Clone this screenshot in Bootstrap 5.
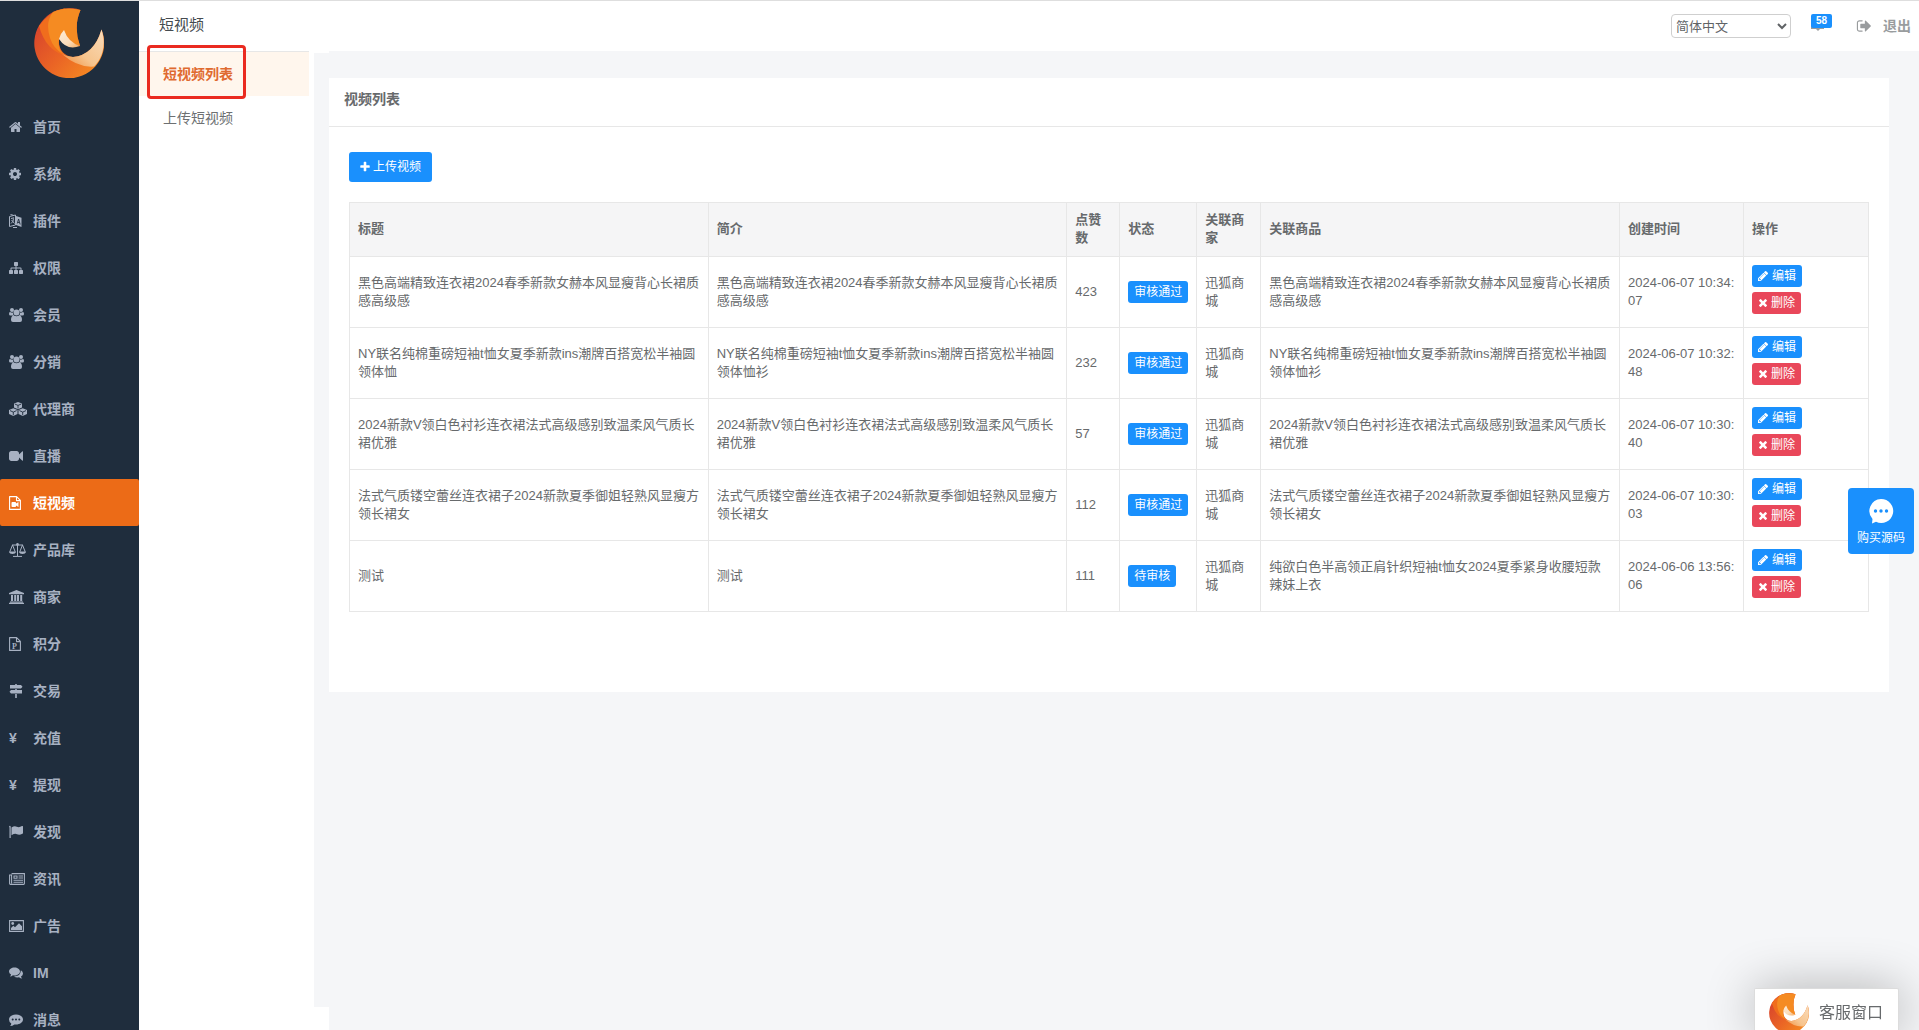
<!DOCTYPE html>
<html lang="zh-CN">
<head>
<meta charset="utf-8">
<meta name="viewport" content="width=device-width, initial-scale=1">
<title>短视频</title>
<link href="https://cdn.jsdelivr.net/npm/bootstrap@5.3.0/dist/css/bootstrap.min.css" rel="stylesheet">
<style>
  :root {
    --brand-blue: #1a90fd;
    --brand-red: #e9475a;
    --ink: #676a6c;
    --line: #e7e7e7;
  }
  body {
    font-family: "Liberation Sans", "Noto Sans CJK SC", sans-serif;
    font-size: 13px;
    line-height: 18px;
    color: var(--ink);
    background: #fff;
    border-top: 1px solid #dedede;
  }
  .icon { height: 14px; width: auto; fill: currentColor; display: block; }
  .sprite { width: 0; height: 0; }

  .side-bar { width: 139px; background: #1f2d3d; }
  .side-logo { padding: 7px 0 25px 34px; }
  .side-logo svg { width: 70px; height: 70px; display: block; }
  .side-link {
    height: 47px;
    padding: 0 9px;
    color: #a7b1c2;
    font-size: 14px;
    font-weight: 600;
  }
  .side-link:hover { color: #fff; }
  .side-link.active { background: #ec6b17; color: #fff; border-radius: 2px; }
  .side-icon { width: 24px; }

  .sub-menu { width: 170px; margin-right: 5px; }
  .sub-title { height: 51px; padding: 14px 20px; font-size: 15px; line-height: 20px; color: #454b50; border-bottom: 1px solid var(--line); }
  .sub-link { height: 44px; padding: 0 24px; font-size: 14px; color: #6d7072; }
  .sub-link.active { background: #fff6ed; color: #df6a30; font-weight: 600; }
  .focus-frame { top: -7px; left: 8px; width: 99px; height: 54px; border: 3px solid #ea2a20; border-radius: 4px; pointer-events: none; }

  .gutter { width: 15px; margin: 2px 0 23px; background: #f5f6f8; }
  .top-bar { height: 50px; padding: 0 8px; }
  .lang-select { width: 120px; height: 24px; border: 1px solid #cfcfcf; border-radius: 4px; background: #fff; color: #606366; font-size: 13px; }
  .msg-count { width: 21px; height: 14px; background: var(--brand-blue); font-size: 10px; line-height: 14px; border-radius: 2px; padding: 0; }
  .msg-link { width: 21px; height: 18px; margin: 0 24px 6px 20px; color: #999c9e; }
  .msg-link .icon { height: 18px; width: 14px; }
  .log-out { color: #999c9e; font-size: 14px; font-weight: 600; gap: 11px; }
  .log-out .icon { height: 16px; }

  .page-area { background: #f5f6f8; padding: 27px 30px 0 0; }
  .panel { background: #fff; padding-bottom: 80px; }
  .panel-head { height: 49px; padding: 13px 15px; font-size: 14px; font-weight: 600; border-bottom: 1px solid var(--line); }
  .panel-main { padding: 25px 20px 0; }

  .btn-blue, .btn-rose { --bs-btn-color: #fff; --bs-btn-hover-color: #fff; font-size: 12px; border: 0; }
  .btn-blue { --bs-btn-bg: var(--brand-blue); --bs-btn-hover-bg: #0b7fe8; }
  .btn-rose { --bs-btn-bg: var(--brand-red); --bs-btn-hover-bg: #d8394c; }
  .btn-add { height: 30px; padding: 0 11px; border-radius: 3px; gap: 3px; margin-bottom: 20px; }
  .btn-tiny { height: 22px; padding: 0 6px; border-radius: 3px; line-height: 20px; gap: 3px; }
  .btn-tiny .icon, .btn-add .icon { height: 12px; }

  .video-table { --bs-table-color: #676a6c; --bs-table-bg: #fff; --bs-table-border-color: #e7e7e7; table-layout: fixed; color: var(--ink); border-color: var(--line); }
  .video-table td, .video-table th { padding: 8px; vertical-align: middle; word-break: break-all; }
  .video-table th { height: 54px; padding: 7px 8px 9px; font-weight: 600; background: #f5f5f6; border-bottom-color: #ddd; }
  .video-table td { height: 71px; }
  .video-table td.ops { vertical-align: top; padding-bottom: 0; }
  .ops-stack { gap: 5px; }
  .w-likes { width: 53px; } .w-state { width: 77px; } .w-shop { width: 64px; }
  .w-time { width: 124px; } .w-ops { width: 125px; }

  .buy-float { right: 5px; top: 488px; width: 66px; height: 66px; padding: 10px 0 0; border-radius: 4px; gap: 5px; }
  .buy-float .icon { height: 26px; }
  .chat-dock { right: 20px; bottom: 0; width: 145px; height: 42px; padding: 4px 14px; background: #fff; border: 1px solid #dcdcdc; border-bottom: 0; border-radius: 2px 2px 0 0; box-shadow: 1px 1px 50px rgba(0, 0, 0, .3); }
  .chat-dock svg { width: 40px; height: 40px; flex: none; }
  .chat-name { font-size: 16px; line-height: 40px; color: #676a6c; }
  .chat-clip { height: 37px; overflow: hidden; gap: 10px; }
</style>
</head>
<body class="vh-100 overflow-hidden d-flex">

<svg class="sprite position-absolute" aria-hidden="true">
  <defs>
    <linearGradient id="g-base" x1="0" y1=".3" x2=".8" y2="1"><stop offset="0" stop-color="#d8452c"/><stop offset=".5" stop-color="#ea6425"/><stop offset="1" stop-color="#f58a22"/></linearGradient>
    <linearGradient id="g-light" x1="1" y1="0" x2="0" y2="1"><stop offset="0" stop-color="#f9dcbb"/><stop offset=".6" stop-color="#f7c48d"/><stop offset="1" stop-color="#ef8c3c"/></linearGradient>
    <linearGradient id="g-tooth" x1="0" y1="0" x2="1" y2="1"><stop offset="0" stop-color="#fdebd6"/><stop offset=".6" stop-color="#fbdcba"/><stop offset="1" stop-color="#f6a95c"/></linearGradient>
    <symbol id="logo" viewBox="0 0 70 70">
      <path fill="url(#g-base)" d="M46.500 2A35 35 0 1 0 67.500 21.500Q60 47 39 49C30 48 24 41 25 31L46 38Q39 19 46.500 2Z"/>
      <path fill="#f06d1d" d="M5 18Q15 4 30 .5Q46 4 42 30L25 31C24 39 27 44 31 47Q12 43 5 18Z"/>
      <path fill="#f58b22" d="M46.500 2Q32 -2 19 4Q11 14 16 30Q19 40 29 46C25 42 24 37 25 31L46 38Q39 19 46.500 2Z"/>
      <path fill="url(#g-light)" d="M67.500 21.500C74 40 65 54 60 58.500Q44 60 28 46Q33 49 39 49Q60 47 67.500 21.500Z"/>
      <path fill="url(#g-tooth)" d="M30 22Q26 26 25 31Q33 43 46 38Q34 34 30 22Z"/>
    </symbol>
    <symbol id="i-home" viewBox="64 0 1664 1792"><path d="M1472 992v480q0 26-19 45t-45 19h-384v-384h-256v384h-384q-26 0-45-19t-19-45v-480q0-1 .5-3t.5-3l575-474 575 474q1 2 1 6zm223-69l-62 74q-8 9-21 11h-3q-13 0-21-7l-692-577-692 577q-12 8-24 7-13-2-21-11l-62-74q-8-10-7-23.500t11-21.500l719-599q32-26 76-26t76 26l244 204v-195q0-14 9-23t23-9h192q14 0 23 9t9 23v408l219 182q10 8 11 21.500t-7 23.500z"/></symbol>
    <symbol id="i-cog" viewBox="128 0 1536 1792"><path d="M1152 896q0-106-75-181t-181-75-181 75-75 181 75 181 181 75 181-75 75-181zm512-109v222q0 12-8 23t-20 13l-185 28q-19 54-39 91 35 50 107 138 10 12 10 25t-9 23q-27 37-99 108t-94 71q-12 0-26-9l-138-108q-44 23-91 38-16 136-29 186-7 28-36 28h-222q-14 0-24.500-8.500t-11.500-21.500l-28-184q-49-16-90-37l-141 107q-10 9-25 9-14 0-25-11-126-114-165-168-7-10-7-23 0-12 8-23 15-21 51-66.500t54-70.500q-27-50-41-99l-183-27q-13-2-21-12.500t-8-23.500v-222q0-12 8-23t19-13l186-28q14-46 39-92-40-57-107-138-10-12-10-24 0-10 9-23 26-36 98.500-107.500t94.500-71.500q13 0 26 10l138 107q44-23 91-38 16-136 29-186 7-28 36-28h222q14 0 24.500 8.500t11.500 21.500l28 184q49 16 90 37l142-107q9-9 24-9 13 0 25 10 129 119 165 170 7 8 7 22 0 12-8 23-15 21-51 66.500t-54 70.500q26 50 41 98l183 28q13 2 21 12.500t8 23.500z"/></symbol>
    <symbol id="i-lang" viewBox="0 0 13 14"><path fill="none" stroke="currentColor" d="M.5 2.500l6-1.500v10l-6 1.500zM2 4.500l3-.7M2 9.500q2.500-1.500 2.500-5M2.500 6l3 3.500M1.500.5l3 .8M4 13.500h4"/><path d="M7 2l5.500 1.700v9.300L7 11z"/><path stroke="#1f2d3d" stroke-width=".9" fill="none" d="M8.300 9.500l1.300-4.500 1.600 5.500M8.800 8.300l1.900.5"/></symbol>
    <symbol id="i-sitemap" viewBox="0 0 1792 1792"><path d="M1792 1248v320q0 40-28 68t-68 28h-320q-40 0-68-28t-28-68v-320q0-40 28-68t68-28h96v-192h-512v192h96q40 0 68 28t28 68v320q0 40-28 68t-68 28h-320q-40 0-68-28t-28-68v-320q0-40 28-68t68-28h96v-192h-512v192h96q40 0 68 28t28 68v320q0 40-28 68t-68 28h-320q-40 0-68-28t-28-68v-320q0-40 28-68t68-28h96v-192q0-52 38-90t90-38h512v-192h-96q-40 0-68-28t-28-68v-320q0-40 28-68t68-28h320q40 0 68 28t28 68v320q0 40-28 68t-68 28h-96v192h512q52 0 90 38t38 90v192h96q40 0 68 28t28 68z"/></symbol>
    <symbol id="i-group" viewBox="0 0 15 14"><circle cx="3" cy="2" r="2"/><circle cx="12" cy="2" r="2"/><circle cx="7.500" cy="4.600" r="3"/><path d="M0 6Q0 4 1 4q2 1 3 .5Q3.500 6.500 5 7.500H1.500Q0 7.500 0 6zM15 6Q15 4 14 4q-2 1-3 .5.500 2-1 3h3.500Q15 7.500 15 6zM4.800 7.500q2.700 1.600 5.400 0Q13 7.500 13 12q0 2-2 2H4q-2 0-2-2 0-4.500 2.800-4.500z"/></symbol>
    <symbol id="i-cubes" viewBox="0 0 18 14"><path d="M9 0l4 1.500v4L9 7.300 5 5.500v-4zM4.300 6.300l4.200 1.800v4L4.300 14 0 12V8.100zM13.700 6.300L18 8.100V12l-4.300 2-4.200-1.900v-4z"/><path fill="none" stroke="#1f2d3d" stroke-width=".9" d="M5.800 2L9 3.400 12.300 2M9 3.400V6.500M1 8.600l3.300 1.500 3.300-1.500M4.300 10v3.200M10.400 8.600l3.300 1.500L17 8.600M13.700 10v3.200"/></symbol>
    <symbol id="i-video" viewBox="0 0 1792 1792"><path d="M1792 352v1088q0 42-39 59-13 5-25 5-27 0-45-19l-403-403v166q0 119-84.500 203.500t-203.500 84.500h-704q-119 0-203.500-84.500t-84.500-203.500v-704q0-119 84.500-203.500t203.500-84.500h704q119 0 203.500 84.500t84.500 203.500v165l403-402q18-19 45-19 12 0 25 5 39 17 39 59z"/></symbol>
    <symbol id="i-file-video" viewBox="0 0 12 14"><path fill="none" stroke="currentColor" stroke-width="1.100" stroke-linejoin="round" d="M.6.6h7l3.800 3.800v9H.6zM7.500.6v4h3.900"/><path d="M2.500 6.800q0-.8.800-.8h2.900q.8 0 .8.800v.8L9.500 6v5L7 9.400v.8q0 .8-.8.800H3.300q-.8 0-.8-.8z"/></symbol>
    <symbol id="i-scale" viewBox="0 0 17 14"><path fill="none" stroke="currentColor" d="M3 2h11M8.500 1v12M4 13.400h9M3.500 2L.7 9h5.600zM13.500 2l-2.800 7h5.600z"/><circle cx="8.500" cy="1.400" r="1.300"/><path d="M0 9h7q-.5 2-3.500 2T0 9zM10 9h7q-.5 2-3.500 2T10 9z"/></symbol>
    <symbol id="i-bank" viewBox="0 0 15 14"><path d="M7.500 0L15 3v1.200H0V3zM2 5h2v6H2zM5.200 5h2v6h-2zM8 5h2v6H8zM11.200 5h2v6h-2zM1 11.400h13v1H1zM0 12.800h15V14H0z"/></symbol>
    <symbol id="i-file-p" viewBox="0 0 12 14"><path fill="none" stroke="currentColor" stroke-width="1.100" stroke-linejoin="round" d="M.6.6h7l3.800 3.800v9H.6zM7.500.6v4h3.900"/><text x="3" y="11.500" font-size="8" font-family="Liberation Serif, serif" font-weight="700">P</text></symbol>
    <symbol id="i-signs" viewBox="0 0 14 14"><path d="M6.200 0h1.600v1H12l1.500 1.700L12 4.500H1V1h5.200zM6.200 5h1.600v1H13v3.500H2L.5 7.700 2 6h4.200zM6.200 10h1.600v4H6.200z"/></symbol>
    <symbol id="i-flag" viewBox="0 0 14 14"><path d="M0 1.500q1-1.500 1.700 0V13H.5V2.500zM2.500 2.500q3-2 5.300-.8t5.200-.6q1-.4 1 .5v6.300q0 .6-.6.800-3 1.600-5.400.5-2-1.100-5.500 1z"/></symbol>
    <symbol id="i-news" viewBox="0 0 16 14"><path fill="none" stroke="currentColor" stroke-width="1.100" d="M2.600 1.600h12.800v10q0 .8-.8.800H1.400q-.8 0-.8-.8V3h2v8.500M9.500 4h4.500M9.500 6h4.500M4.500 8.300H14M4.500 10.300H14M5 4h3v2.200H5z"/></symbol>
    <symbol id="i-image" viewBox="0 0 15 14"><path fill="none" stroke="currentColor" stroke-width="1.100" d="M.6 1.600h13.800v10.800H.6z"/><circle cx="3.700" cy="4.500" r="1.400"/><path d="M2 11V9l2.300-2.200L6 8.300l4-4 3 3V11z"/></symbol>
    <symbol id="i-comments" viewBox="0 0 14 14"><path d="M5.500 1.500C8.500 1.500 11 3.200 11 5.500S8.500 9.500 5.500 9.500q-.8 0-1.500-.2Q2.500 10.500.9 10.500 2 9.500 2 8.500 0 7.300 0 5.500C0 3.200 2.400 1.500 5.500 1.500zM11.900 4.200Q14 5.500 14 7.500q0 1.800-2 3 .1 1 1.200 2-1.700 0-3.200-1.200-3 .5-5-.9 6.500 0 6.900-6.200z"/></symbol>
    <symbol id="i-commenting" viewBox="0 0 14 14"><path fill-rule="evenodd" d="M7 1.500c3.900 0 7 2.200 7 5s-3.100 5-7 5q-.8 0-1.600-.1Q3.400 13 1 13q1.200-1 1.300-2.500Q0 9 0 6.500c0-2.800 3.100-5 7-5zM3.700 5.500a1 1 0 1 0 0 2 1 1 0 0 0 0-2zm3.300 0a1 1 0 1 0 0 2 1 1 0 0 0 0-2zm3.300 0a1 1 0 1 0 0 2 1 1 0 0 0 0-2z"/></symbol>
    <symbol id="i-mail" viewBox="0 0 14 18"><path d="M0 2h13v13H9l-2 2-2-2H0z"/></symbol>
    <symbol id="i-out" viewBox="64 0 1600 1792"><path d="M704 1440q0 4 1 20t.5 26.500-3 23.500-10 19.500-20.500 6.500h-320q-119 0-203.500-84.500t-84.500-203.500v-704q0-119 84.500-203.500t203.500-84.500h320q13 0 22.500 9.500t9.500 22.500q0 4 1 20t.5 26.500-3 23.500-10 19.500-20.500 6.500h-320q-66 0-113 47t-47 113v704q0 66 47 113t113 47h312l11.500 1 11.500 3 8 5.500 7 9 2 13.500zm928-544q0 26-19 45l-544 544q-19 19-45 19t-45-19-19-45v-288h-448q-26 0-45-19t-19-45v-384q0-26 19-45t45-19h448v-288q0-26 19-45t45-19 45 19l544 544q19 19 19 45z"/></symbol>
    <symbol id="i-plus" viewBox="192 0 1408 1792"><path d="M1600 736v192q0 40-28 68t-68 28h-416v416q0 40-28 68t-68 28h-192q-40 0-68-28t-28-68v-416h-416q-40 0-68-28t-28-68v-192q0-40 28-68t68-28h416v-416q0-40 28-68t68-28h192q40 0 68 28t28 68v416h416q40 0 68 28t28 68z"/></symbol>
    <symbol id="i-pencil" viewBox="128 0 1664 1792"><path d="M491 1536l91-91-235-235-91 91v107h128v128h107zm523-928q0-22-22-22-10 0-17 7l-542 542q-7 7-7 17 0 22 22 22 10 0 17-7l542-542q7-7 7-17zm-54-192l416 416-832 832h-416v-416zm683 96q0 53-37 90l-166 166-416-416 166-165q36-38 90-38 53 0 91 38l235 234q37 39 37 91z"/></symbol>
    <symbol id="i-times" viewBox="192 60 1408 1792"><path d="M1490 1322q0 40-28 68l-136 136q-28 28-68 28t-68-28l-294-294-294 294q-28 28-68 28t-68-28l-136-136q-28-28-28-68t28-68l294-294-294-294q-28-28-28-68t28-68l136-136q28-28 68-28t68 28l294 294 294-294q28-28 68-28t68 28l136 136q28 28 28 68t-28 68l-294 294 294 294q28 28 28 68z"/></symbol>
    <symbol id="i-bubble" viewBox="0 0 26 26"><path fill-rule="evenodd" d="M13 1a12 12 0 1 1-5 22.800L4 25.500l.5-4.500A12 12 0 0 1 13 1zM7.500 11.300a1.700 1.700 0 1 0 0 3.400 1.700 1.700 0 0 0 0-3.400zm5.500 0a1.700 1.700 0 1 0 0 3.400 1.700 1.700 0 0 0 0-3.400zm5.500 0a1.700 1.700 0 1 0 0 3.400 1.700 1.700 0 0 0 0-3.400z"/></symbol>
  </defs>
</svg>

<nav class="side-bar flex-shrink-0 overflow-hidden" aria-label="主菜单">
  <a class="side-logo d-block" href="#" aria-label="首页"><svg><use href="#logo"/></svg></a>
  <div class="nav flex-column flex-nowrap">
    <a class="side-link d-flex align-items-center text-decoration-none" href="#"><span class="side-icon"><svg class="icon" viewBox="0 0 13 14"><use href="#i-home"/></svg></span>首页</a>
    <a class="side-link d-flex align-items-center text-decoration-none" href="#"><span class="side-icon"><svg class="icon" viewBox="0 0 12 14"><use href="#i-cog"/></svg></span>系统</a>
    <a class="side-link d-flex align-items-center text-decoration-none" href="#"><span class="side-icon"><svg class="icon" viewBox="0 0 13 14"><use href="#i-lang"/></svg></span>插件</a>
    <a class="side-link d-flex align-items-center text-decoration-none" href="#"><span class="side-icon"><svg class="icon" viewBox="0 0 14 14"><use href="#i-sitemap"/></svg></span>权限</a>
    <a class="side-link d-flex align-items-center text-decoration-none" href="#"><span class="side-icon"><svg class="icon" viewBox="0 0 15 14"><use href="#i-group"/></svg></span>会员</a>
    <a class="side-link d-flex align-items-center text-decoration-none" href="#"><span class="side-icon"><svg class="icon" viewBox="0 0 15 14"><use href="#i-group"/></svg></span>分销</a>
    <a class="side-link d-flex align-items-center text-decoration-none" href="#"><span class="side-icon"><svg class="icon" viewBox="0 0 18 14"><use href="#i-cubes"/></svg></span>代理商</a>
    <a class="side-link d-flex align-items-center text-decoration-none" href="#"><span class="side-icon"><svg class="icon" viewBox="0 0 14 14"><use href="#i-video"/></svg></span>直播</a>
    <a class="side-link active d-flex align-items-center text-decoration-none" href="#" aria-current="page"><span class="side-icon"><svg class="icon" viewBox="0 0 12 14"><use href="#i-file-video"/></svg></span>短视频</a>
    <a class="side-link d-flex align-items-center text-decoration-none" href="#"><span class="side-icon"><svg class="icon" viewBox="0 0 17 14"><use href="#i-scale"/></svg></span>产品库</a>
    <a class="side-link d-flex align-items-center text-decoration-none" href="#"><span class="side-icon"><svg class="icon" viewBox="0 0 15 14"><use href="#i-bank"/></svg></span>商家</a>
    <a class="side-link d-flex align-items-center text-decoration-none" href="#"><span class="side-icon"><svg class="icon" viewBox="0 0 12 14"><use href="#i-file-p"/></svg></span>积分</a>
    <a class="side-link d-flex align-items-center text-decoration-none" href="#"><span class="side-icon"><svg class="icon" viewBox="0 0 14 14"><use href="#i-signs"/></svg></span>交易</a>
    <a class="side-link d-flex align-items-center text-decoration-none" href="#"><span class="side-icon">¥</span>充值</a>
    <a class="side-link d-flex align-items-center text-decoration-none" href="#"><span class="side-icon">¥</span>提现</a>
    <a class="side-link d-flex align-items-center text-decoration-none" href="#"><span class="side-icon"><svg class="icon" viewBox="0 0 14 14"><use href="#i-flag"/></svg></span>发现</a>
    <a class="side-link d-flex align-items-center text-decoration-none" href="#"><span class="side-icon"><svg class="icon" viewBox="0 0 16 14"><use href="#i-news"/></svg></span>资讯</a>
    <a class="side-link d-flex align-items-center text-decoration-none" href="#"><span class="side-icon"><svg class="icon" viewBox="0 0 15 14"><use href="#i-image"/></svg></span>广告</a>
    <a class="side-link d-flex align-items-center text-decoration-none" href="#"><span class="side-icon"><svg class="icon" viewBox="0 0 14 14"><use href="#i-comments"/></svg></span>IM</a>
    <a class="side-link d-flex align-items-center text-decoration-none" href="#"><span class="side-icon"><svg class="icon" viewBox="0 0 14 14"><use href="#i-commenting"/></svg></span>消息</a>
  </div>
</nav>

<nav class="sub-menu flex-shrink-0" aria-label="短视频">
  <div class="sub-title">短视频</div>
  <div class="position-relative">
    <a class="sub-link active d-flex align-items-center text-decoration-none" href="#">短视频列表</a>
    <a class="sub-link d-flex align-items-center text-decoration-none" href="#">上传短视频</a>
    <div class="focus-frame position-absolute"></div>
  </div>
</nav>

<div class="flex-grow-1 d-flex flex-column overflow-hidden">
  <header class="top-bar d-flex align-items-center justify-content-end flex-shrink-0">
    <select class="lang-select" aria-label="语言"><option>简体中文</option></select>
    <a class="msg-link position-relative" href="#" aria-label="消息">
      <svg class="icon" viewBox="0 0 14 18"><use href="#i-mail"/></svg>
      <span class="badge msg-count position-absolute top-0 start-0">58</span>
    </a>
    <a class="log-out d-flex align-items-center text-decoration-none" href="#"><svg class="icon" viewBox="0 0 16 16"><use href="#i-out"/></svg>退出</a>
  </header>

  <div class="d-flex flex-grow-1">
    <div class="gutter flex-shrink-0"></div>
    <main class="page-area flex-grow-1">
      <section class="panel">
        <h1 class="panel-head m-0">视频列表</h1>
        <div class="panel-main">
          <button type="button" class="btn btn-blue btn-add d-flex align-items-center"><svg class="icon" viewBox="0 0 10 12"><use href="#i-plus"/></svg> 上传视频</button>
          <table class="table table-bordered video-table mb-0">
            <colgroup><col><col><col class="w-likes"><col class="w-state"><col class="w-shop"><col><col class="w-time"><col class="w-ops"></colgroup>
            <thead>
              <tr><th scope="col">标题</th><th scope="col">简介</th><th scope="col">点赞数</th><th scope="col">状态</th><th scope="col">关联商家</th><th scope="col">关联商品</th><th scope="col">创建时间</th><th scope="col">操作</th></tr>
            </thead>
            <tbody>
              <tr>
                <td>黑色高端精致连衣裙2024春季新款女赫本风显瘦背心长裙质感高级感</td>
                <td>黑色高端精致连衣裙2024春季新款女赫本风显瘦背心长裙质感高级感</td>
                <td>423</td><td><button type="button" class="btn btn-blue btn-tiny d-block">审核通过</button></td><td>迅狐商城</td>
                <td>黑色高端精致连衣裙2024春季新款女赫本风显瘦背心长裙质感高级感</td>
                <td>2024-06-07 10:34:07</td>
                <td class="ops"><div class="ops-stack d-flex flex-column align-items-start"><button type="button" class="btn btn-blue btn-tiny d-flex align-items-center"><svg class="icon" viewBox="0 0 11 12"><use href="#i-pencil"/></svg>编辑</button><button type="button" class="btn btn-rose btn-tiny d-flex align-items-center"><svg class="icon" viewBox="0 0 10 12"><use href="#i-times"/></svg>删除</button></div></td>
              </tr>
              <tr>
                <td>NY联名纯棉重磅短袖t恤女夏季新款ins潮牌百搭宽松半袖圆领体恤</td>
                <td>NY联名纯棉重磅短袖t恤女夏季新款ins潮牌百搭宽松半袖圆领体恤衫</td>
                <td>232</td><td><button type="button" class="btn btn-blue btn-tiny d-block">审核通过</button></td><td>迅狐商城</td>
                <td>NY联名纯棉重磅短袖t恤女夏季新款ins潮牌百搭宽松半袖圆领体恤衫</td>
                <td>2024-06-07 10:32:48</td>
                <td class="ops"><div class="ops-stack d-flex flex-column align-items-start"><button type="button" class="btn btn-blue btn-tiny d-flex align-items-center"><svg class="icon" viewBox="0 0 11 12"><use href="#i-pencil"/></svg>编辑</button><button type="button" class="btn btn-rose btn-tiny d-flex align-items-center"><svg class="icon" viewBox="0 0 10 12"><use href="#i-times"/></svg>删除</button></div></td>
              </tr>
              <tr>
                <td>2024新款V领白色衬衫连衣裙法式高级感别致温柔风气质长裙优雅</td>
                <td>2024新款V领白色衬衫连衣裙法式高级感别致温柔风气质长裙优雅</td>
                <td>57</td><td><button type="button" class="btn btn-blue btn-tiny d-block">审核通过</button></td><td>迅狐商城</td>
                <td>2024新款V领白色衬衫连衣裙法式高级感别致温柔风气质长裙优雅</td>
                <td>2024-06-07 10:30:40</td>
                <td class="ops"><div class="ops-stack d-flex flex-column align-items-start"><button type="button" class="btn btn-blue btn-tiny d-flex align-items-center"><svg class="icon" viewBox="0 0 11 12"><use href="#i-pencil"/></svg>编辑</button><button type="button" class="btn btn-rose btn-tiny d-flex align-items-center"><svg class="icon" viewBox="0 0 10 12"><use href="#i-times"/></svg>删除</button></div></td>
              </tr>
              <tr>
                <td>法式气质镂空蕾丝连衣裙子2024新款夏季御姐轻熟风显瘦方领长裙女</td>
                <td>法式气质镂空蕾丝连衣裙子2024新款夏季御姐轻熟风显瘦方领长裙女</td>
                <td>112</td><td><button type="button" class="btn btn-blue btn-tiny d-block">审核通过</button></td><td>迅狐商城</td>
                <td>法式气质镂空蕾丝连衣裙子2024新款夏季御姐轻熟风显瘦方领长裙女</td>
                <td>2024-06-07 10:30:03</td>
                <td class="ops"><div class="ops-stack d-flex flex-column align-items-start"><button type="button" class="btn btn-blue btn-tiny d-flex align-items-center"><svg class="icon" viewBox="0 0 11 12"><use href="#i-pencil"/></svg>编辑</button><button type="button" class="btn btn-rose btn-tiny d-flex align-items-center"><svg class="icon" viewBox="0 0 10 12"><use href="#i-times"/></svg>删除</button></div></td>
              </tr>
              <tr>
                <td>测试</td>
                <td>测试</td>
                <td>111</td><td><button type="button" class="btn btn-blue btn-tiny d-block">待审核</button></td><td>迅狐商城</td>
                <td>纯欲白色半高领正肩针织短袖t恤女2024夏季紧身收腰短款辣妹上衣</td>
                <td>2024-06-06 13:56:06</td>
                <td class="ops"><div class="ops-stack d-flex flex-column align-items-start"><button type="button" class="btn btn-blue btn-tiny d-flex align-items-center"><svg class="icon" viewBox="0 0 11 12"><use href="#i-pencil"/></svg>编辑</button><button type="button" class="btn btn-rose btn-tiny d-flex align-items-center"><svg class="icon" viewBox="0 0 10 12"><use href="#i-times"/></svg>删除</button></div></td>
              </tr>
            </tbody>
          </table>
        </div>
      </section>
    </main>
  </div>
</div>

<button type="button" class="btn btn-blue buy-float position-fixed d-flex flex-column align-items-center"><svg class="icon" viewBox="0 0 26 26"><use href="#i-bubble"/></svg>购买源码</button>

<div class="chat-dock position-fixed">
  <div class="chat-clip d-flex align-items-start"><svg><use href="#logo"/></svg><span class="chat-name">客服窗口</span></div>
</div>

<script src="https://cdn.jsdelivr.net/npm/bootstrap@5.3.0/dist/js/bootstrap.bundle.min.js"></script>
</body>
</html>
